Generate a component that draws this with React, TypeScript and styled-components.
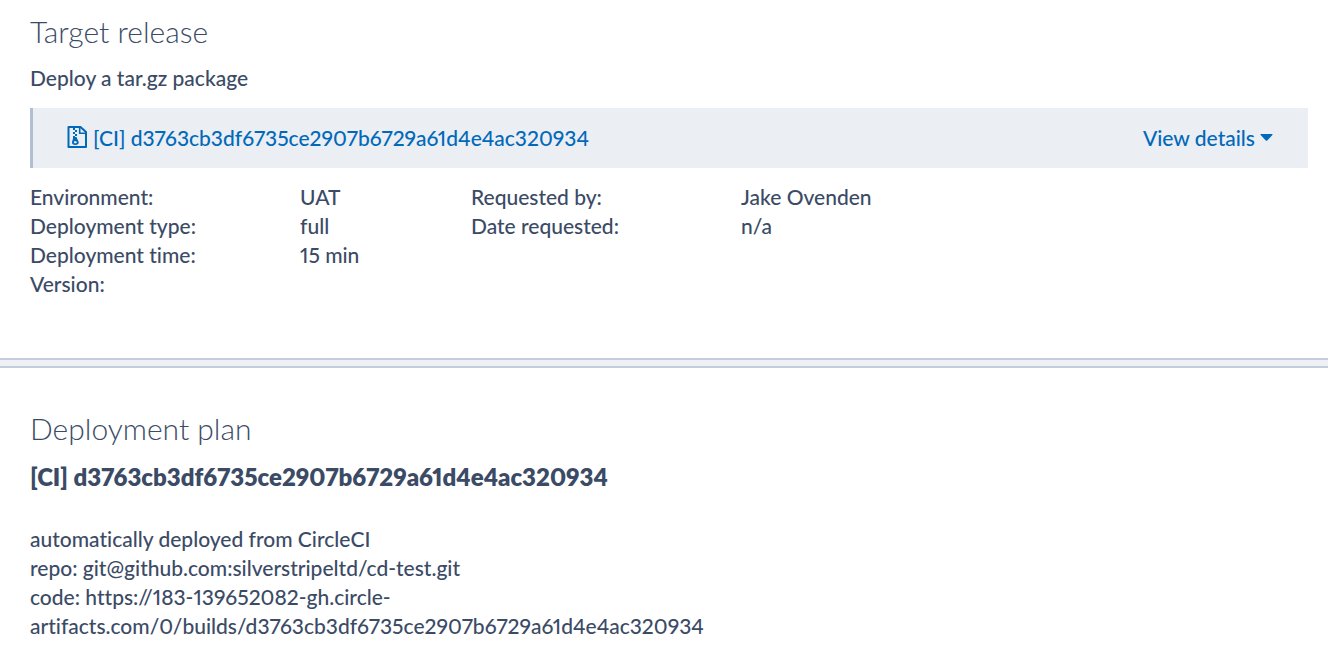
import React from "react";
import styled, { createGlobalStyle } from "styled-components";

const GlobalStyle = createGlobalStyle`
  *, *::before, *::after { box-sizing: border-box; }
  body {
    margin: 0;
    background: #fff;
    color: #3b4b66;
    font-family: Lato, "Liberation Sans", sans-serif;
    font-size: 21px;
    font-weight: 500;
    font-variant-ligatures: none;
    font-variant-numeric: proportional-nums;
    line-height: 29px;
    -webkit-font-smoothing: antialiased;
  }
`;

const Section = styled.section<{ $first?: boolean }>`
  padding: ${(p) => (p.$first ? "11px 20px 60px 30px" : "40px 20px 30px 30px")};
`;

const SectionTitle = styled.h2`
  margin: 0;
  font-size: 30px;
  font-weight: 300;
  line-height: 40px;
`;

const Intro = styled.p`
  margin: 12px 0 16px;
`;

const ReleaseBar = styled.div`
  display: flex;
  align-items: center;
  justify-content: space-between;
  height: 60px;
  padding: 0 35px 2px 34px;
  border-left: 3px solid #b2bed3;
  background: #ebeef3;
`;

const ReleaseLink = styled.a`
  display: flex;
  align-items: center;
  gap: 6px;
  color: #0069ba;
  text-decoration: none;
`;

const DetailsButton = styled.button`
  display: flex;
  align-items: center;
  gap: 5px;
  padding: 0;
  border: 0;
  background: none;
  color: #0069ba;
  font: inherit;
  cursor: pointer;
`;

const Facts = styled.div`
  display: flex;
  align-items: flex-start;
  margin-top: 14px;
`;

const FactList = styled.dl<{ $valueWidth: number }>`
  display: grid;
  grid-template-columns: 270px minmax(${(p) => p.$valueWidth}px, auto);
  margin: 0;
`;

const Term = styled.dt``;

const Value = styled.dd`
  margin: 0;
`;

const Divider = styled.hr`
  height: 10px;
  margin: 0;
  border: solid #c5cddc;
  border-width: 2px 0;
  background: #eef0f5;
`;

const ReleaseName = styled.h3`
  margin: 14px 0 32px;
  font-size: 24px;
  font-weight: 800;
  line-height: 30px;
`;

const Description = styled.p`
  max-width: 56%;
  margin: 0;
`;

const ZipIcon = () => (
  <svg width="20" height="22" viewBox="0 0 20 22" fill="none" aria-hidden="true">
    <path d="M1.5 1H13.5L19 6V21H1.5Z" stroke="currentColor" strokeWidth="2" strokeLinejoin="round" />
    <path d="M12.7 1.5V7.2H18.5" stroke="currentColor" strokeWidth="1.6" />
    <path d="M6 2H8V4H6ZM8 4H10V6H8ZM6 6H8V8H6ZM8 8H10V10H8ZM6 10H8V12H6Z" fill="currentColor" />
    <path
      d="M6.5 11H9.5L11.7 16C12.1 18 10.4 19 8.3 19C6.2 19 4.6 18 5 16ZM8.3 15.2C7.3 15.2 6.8 15.7 6.8 16.3C6.8 17 7.4 17.3 8.3 17.3C9.2 17.3 9.8 17 9.8 16.3C9.8 15.7 9.3 15.2 8.3 15.2Z"
      fill="currentColor"
      fillRule="evenodd"
    />
  </svg>
);

const Caret = () => (
  <svg width="13" height="7" viewBox="0 0 13 7" aria-hidden="true">
    <path d="M1 0H12Q13 .2 12.4 1L7.2 6.4Q6.5 7 5.8 6.4L.6 1Q0 .2 1 0Z" fill="currentColor" />
  </svg>
);

const releaseName = "[CI] d3763cb3df6735ce2907b6729a61d4e4ac320934";

const summary = [
  ["Environment:", "UAT"],
  ["Deployment type:", "full"],
  ["Deployment time:", "15 min"],
  ["Version:", ""],
];

const request = [
  ["Requested by:", "Jake Ovenden"],
  ["Date requested:", "n/a"],
];

const FactColumn = ({ facts, valueWidth }: { facts: string[][]; valueWidth: number }) => (
  <FactList $valueWidth={valueWidth}>
    {facts.map(([term, value]) => (
      <React.Fragment key={term}>
        <Term>{term}</Term>
        <Value>{value}</Value>
      </React.Fragment>
    ))}
  </FactList>
);

export default function App() {
  return (
    <>
      <GlobalStyle />
      <main>
        <Section $first>
          <SectionTitle>Target release</SectionTitle>
          <Intro>Deploy a tar.gz package</Intro>
          <ReleaseBar>
            <ReleaseLink href="#release">
              <ZipIcon />
              {releaseName}
            </ReleaseLink>
            <DetailsButton type="button">
              View details
              <Caret />
            </DetailsButton>
          </ReleaseBar>
          <Facts>
            <FactColumn facts={summary} valueWidth={171} />
            <FactColumn facts={request} valueWidth={171} />
          </Facts>
        </Section>
        <Divider />
        <Section>
          <SectionTitle>Deployment plan</SectionTitle>
          <ReleaseName>{releaseName}</ReleaseName>
          <Description>
            automatically deployed from CircleCI
            <br />
            repo: git@github.com:silverstripeltd/cd-test.git
            <br />
            code: https://183-139652082-gh.circle-artifacts.com/0/builds/d3763cb3df6735ce2907b6729a61d4e4ac320934
          </Description>
        </Section>
      </main>
    </>
  );
}
